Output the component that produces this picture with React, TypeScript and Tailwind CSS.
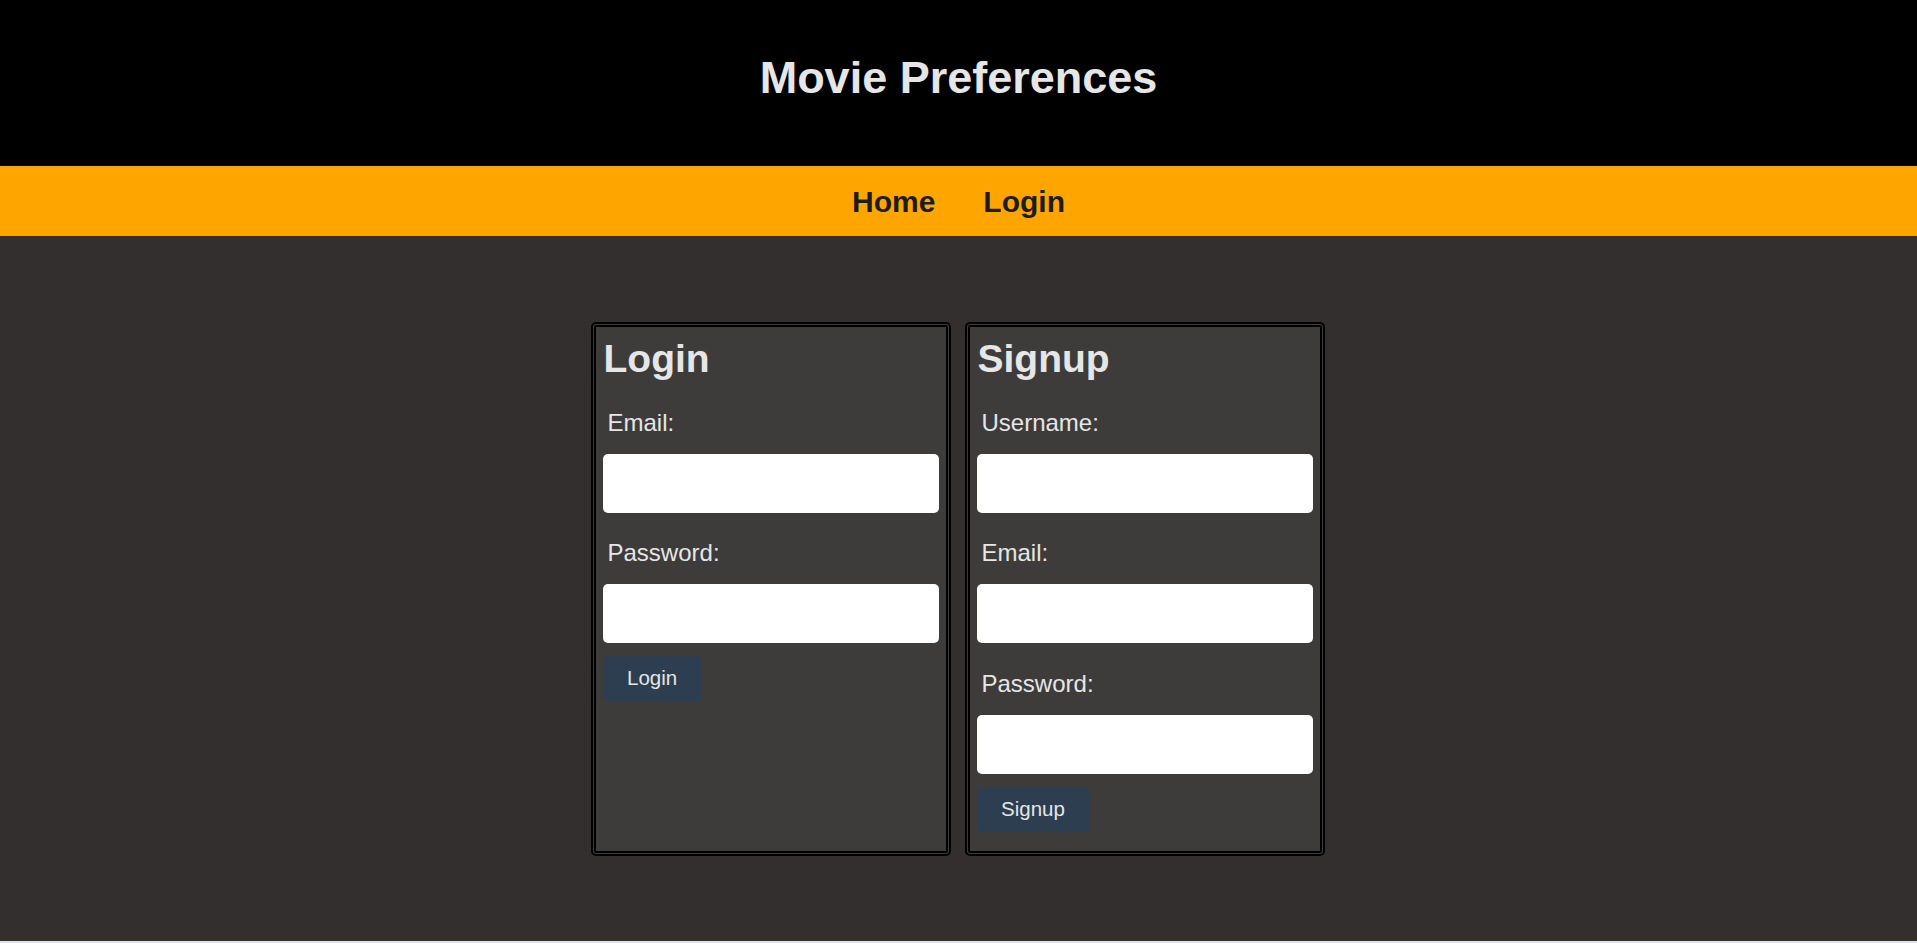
import type { ReactNode } from 'react';

function Field({ label }: { label: string }) {
  return (
    <>
      <label className="mt-[26.5px] block pl-[5px] text-[24px] leading-[27px] text-[#e6e6e6]">
        {label}
      </label>
      <input
        type="text"
        className="mt-[18px] h-[59px] w-full rounded-[5px] bg-white px-2 text-[20px] text-black outline-none"
      />
    </>
  );
}

function Card({ title, children }: { title: string; children: ReactNode }) {
  return (
    <div className="flex w-[360px] flex-col rounded-[5px] border-[5px] border-double border-black bg-[#3d3c3b] px-[7px] pt-[9px] pb-[19px]">
      <h2 className="ml-[1px] text-[39px] leading-[46px] font-bold text-[#e6e6e6]">
        {title}
      </h2>
      {children}
    </div>
  );
}

function SubmitButton({ children }: { children: ReactNode }) {
  return (
    <button
      type="button"
      className="mt-[13px] flex h-[45px] items-center self-start rounded-[5px] bg-[#2c3e50] px-[24.5px] text-[20.5px] text-[#e6e6e6]"
    >
      {children}
    </button>
  );
}

export default function App() {
  return (
    <div
      className="min-h-screen bg-[#dfe3e8]"
      style={{ fontFamily: '"Liberation Sans", Arial, sans-serif' }}
    >
      <header className="h-[166px] bg-black pt-[52px] text-center">
        <h1 className="text-[45px] leading-[52px] font-bold text-[#e6e6e6]">
          Movie Preferences
        </h1>
      </header>

      <nav className="flex h-[70px] items-center justify-center gap-12 bg-[#ffa500]">
        <a href="#" className="text-[30px] font-bold text-[#1c1c1c]">
          Home
        </a>
        <a href="#" className="text-[30px] font-bold text-[#1c1c1c]">
          Login
        </a>
      </nav>

      <main className="flex h-[705px] items-start justify-center bg-[#332f2e] pt-[86px] pr-[2px]">
        <div className="flex items-stretch gap-[14px]">
          <Card title="Login">
            <Field label="Email:" />
            <Field label="Password:" />
            <SubmitButton>Login</SubmitButton>
          </Card>
          <Card title="Signup">
            <Field label="Username:" />
            <Field label="Email:" />
            <Field label="Password:" />
            <SubmitButton>Signup</SubmitButton>
          </Card>
        </div>
      </main>
    </div>
  );
}
